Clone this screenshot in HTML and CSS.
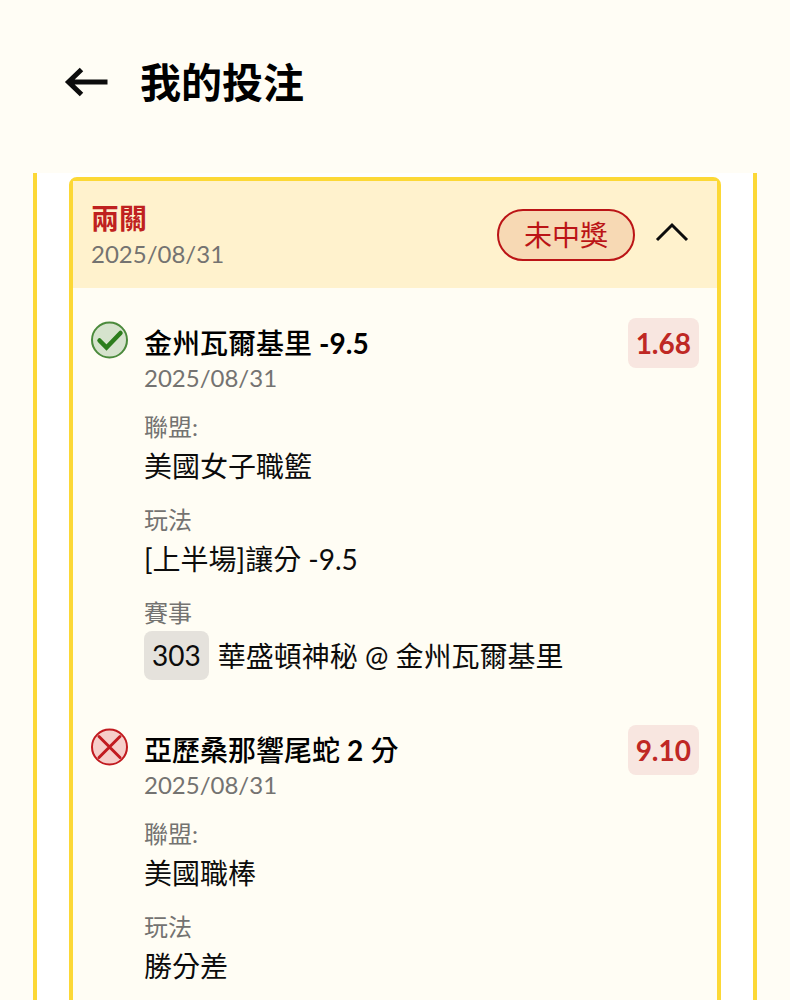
FILE: index.html
```
<!DOCTYPE html>
<html lang="zh-Hant">
    <head>
        <meta charset="UTF-8">
        <meta name="viewport" content="width=device-width, initial-scale=1">
        <title>我的投注</title>
        <link rel="stylesheet" href="styles.css">
    </head>
    <body>
        <header class="topbar">
            <button class="back" type="button" aria-label="返回">
                <svg width="44" height="32" viewBox="0 0 44 32" fill="none" stroke="currentColor" stroke-width="5">
                    <path d="M43.500 15H5M17.500 2.500L4.500 15l13 12.500"/>
                </svg>
            </button>
            <h1>我的投注</h1>
        </header>

        <main class="content">
            <section class="card">
                <div class="card-head">
                    <div class="summary">
                        <h2>兩關</h2>
                        <p class="date">2025/08/31</p>
                    </div>
                    <span class="status">未中獎</span>
                    <button class="toggle" type="button" aria-label="收合" aria-expanded="true">
                        <svg width="34" height="20" viewBox="0 0 34 20" fill="none" stroke="currentColor" stroke-width="3">
                            <path d="M2 18L17 3l15 15"/>
                        </svg>
                    </button>
                </div>

                <div class="card-body">
                    <article class="bet">
                        <svg class="result" width="38" height="38" viewBox="0 0 38 38" fill="none">
                            <circle cx="18.500" cy="19" r="17.500" fill="#d6e3cd" stroke="#4b8a3c" stroke-width="2"/>
                            <path d="M8.500 19.500l7 7 14-14.500" stroke="#2c7d1c" stroke-width="4.500" stroke-linecap="round"/>
                        </svg>
                        <div class="info">
                            <h3>金州瓦爾基里 <b>-9.5</b></h3>
                            <p class="date">2025/08/31</p>
                            <dl>
                                <dt>聯盟:</dt>
                                <dd>美國女子職籃</dd>
                                <dt>玩法</dt>
                                <dd>[上半場]讓分 -9.5</dd>
                                <dt>賽事</dt>
                                <dd class="match"><span class="code">303</span>華盛頓神秘 @ 金州瓦爾基里</dd>
                            </dl>
                        </div>
                        <span class="odds">1.68</span>
                    </article>

                    <article class="bet">
                        <svg class="result" width="38" height="38" viewBox="0 0 38 38" fill="none">
                            <circle cx="18.500" cy="19" r="17.500" fill="#f6ceca" stroke="#c11a1f" stroke-width="2"/>
                            <path d="M8 8.500l21 21M29 8.500l-21 21" stroke="#c11a1f" stroke-width="3" stroke-linecap="round"/>
                        </svg>
                        <div class="info">
                            <h3>亞歷桑那響尾蛇 <b>2</b> 分</h3>
                            <p class="date">2025/08/31</p>
                            <dl>
                                <dt>聯盟:</dt>
                                <dd>美國職棒</dd>
                                <dt>玩法</dt>
                                <dd>勝分差</dd>
                            </dl>
                        </div>
                        <span class="odds">9.10</span>
                    </article>
                </div>
            </section>
        </main>
    </body>
</html>
```
FILE: styles.css
```
*{
    box-sizing: border-box;
}
body{
    margin: 0;
    height: 100vh;
    display: flex;
    flex-direction: column;
    background-color: #fffdf5;
    color: #0c0c0c;
    font-family: Lato, "Noto Sans CJK TC", sans-serif;
    font-size: 28px;
}
h1, h2, h3, p, dl, dd{
    margin: 0;
}
button{
    padding: 0;
    border: 0;
    background: none;
    color: #0c0c0c;
    cursor: pointer;
}
svg{
    display: block;
}

/* top bar */
.topbar{
    display: flex;
    align-items: center;
    gap: 32px;
    padding: 52px 64px 59px;
}
.topbar h1{
    color: #000;
    font-size: 41px;
    font-weight: 600;
    line-height: 62px;
}

/* scrolling list */
.content{
    flex: 1;
    min-height: 0;
    margin: 0 33px;
    padding: 4px 32px 0;
    border-left: 4px solid #fcd836;
    border-right: 4px solid #fcd836;
    background-color: #fff;
    overflow-y: auto;
    scrollbar-width: none;
}
.card{
    min-height: 100%;
    border: 4px solid #fcd836;
    border-radius: 8px;
    background-color: #fffdf4;
}
.card-head{
    display: flex;
    align-items: center;
    padding: 18px 28px 18px 18px;
    background-color: #fff2cd;
}
.summary{
    flex: 1;
}
.card-head h2{
    color: #bf2120;
    font-size: 28px;
    line-height: 39px;
}
.date{
    color: #747371;
    font-size: 24px;
    line-height: 32px;
}
.status{
    margin-right: 20px;
    padding: 0 25px;
    border: 2px solid #bb1416;
    border-radius: 26px;
    background-color: #f7d9b4;
    color: #bb1416;
    line-height: 48px;
}
.toggle{
    padding-bottom: 6px;
}

/* bets */
.card-body{
    display: flex;
    flex-direction: column;
    gap: 45px;
    padding: 30px 18px;
}
.bet{
    display: flex;
    align-items: flex-start;
}
.result{
    margin: 3px 15px 0 0;
}
.info{
    flex: 1;
    padding-top: 6px;
}
.info h3{
    color: #000;
    font-size: 28px;
    font-weight: 500;
    line-height: 38px;
}
dt{
    margin-top: 15px;
    color: #747371;
    font-size: 24px;
    line-height: 36px;
}
dd{
    line-height: 42px;
}
.match{
    display: flex;
    align-items: center;
    gap: 9px;
}
.code{
    padding: 0 8px;
    border-radius: 8px;
    background-color: #e5e2dc;
    line-height: 49px;
}
.odds{
    padding: 0 8px;
    border-radius: 8px;
    background-color: #f8e6e0;
    color: #bf2824;
    font-weight: 700;
    line-height: 50px;
}
```
